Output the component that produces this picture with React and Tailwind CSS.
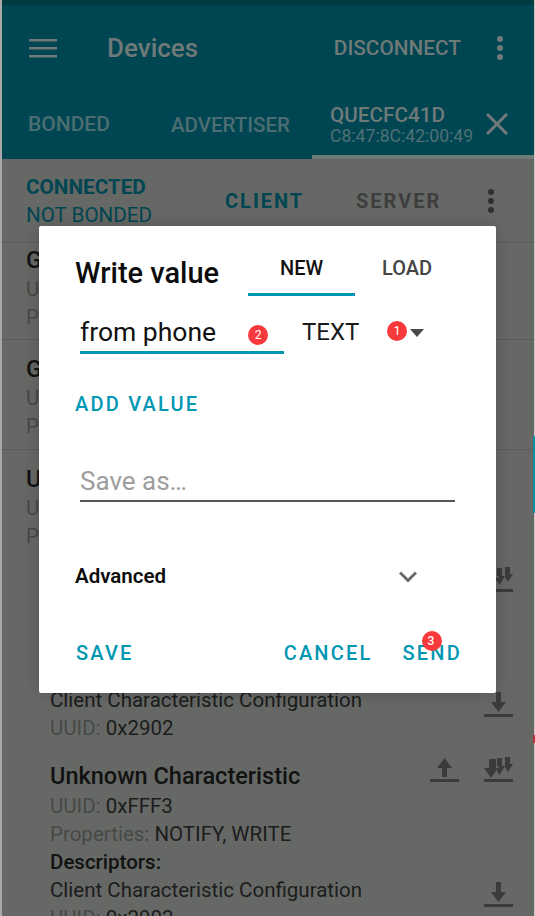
const roboto = { fontFamily: 'Roboto, sans-serif' };

function Badge({ n, className }) {
  return (
    <span className={`absolute flex h-5 w-5 items-center justify-center rounded-full bg-[#f83a3d] text-[12px] leading-none text-white ${className}`}>
      {n}
    </span>
  );
}

function Dots({ className }) {
  return (
    <svg width="8" height="24" viewBox="0 0 8 24" className={className} fill="currentColor">
      <circle cx="4" cy="3" r="3" />
      <circle cx="4" cy="12" r="3" />
      <circle cx="4" cy="21" r="3" />
    </svg>
  );
}

function ReadIcon() {
  return (
    <svg width="29" height="28" viewBox="0 0 29 28" fill="#3a3c3a">
      <path d="M12 2h5v10h5l-7.500 10L7 12h5z" />
      <rect x="0" y="24" width="29" height="3" />
    </svg>
  );
}

function WriteIcon() {
  return (
    <svg width="29" height="28" viewBox="0 0 29 28" fill="#3a3c3a">
      <path d="M14.500 3 22 13h-5v9h-5v-9H7z" />
      <rect x="0" y="24" width="29" height="3" />
    </svg>
  );
}

function NotifyIcon() {
  return (
    <svg width="29" height="28" viewBox="0 0 29 28" fill="#3a3c3a">
      <path d="M21 2h5v7h3l-5 8-3-4.500V9z" />
      <path d="M13 3h5v8h3l-5.500 9-3-4.500L15 11h-2z" />
      <path d="M5 4h7v9h2L7 23 0 13h5z" />
      <rect x="0" y="24" width="29" height="3" />
    </svg>
  );
}

function Field({ label, value }) {
  return (
    <div className="h-7 whitespace-nowrap text-[20.5px] leading-7 text-[#1b1c1b]">
      <span className="text-[#474947]">{label}: </span>
      {value}
    </div>
  );
}

function Service({ name, uuid, className }) {
  return (
    <div className={`pl-6 ${className}`}>
      <div className="h-[30px] text-[23.500px] font-medium leading-[30px] text-[#111211]">{name}</div>
      <Field label="UUID" value={uuid} />
      <Field label="PRIMARY SERVICE" value="" />
    </div>
  );
}

function Characteristic({ uuid, properties, descUuid, icons }) {
  return (
    <div className="relative h-[190px] pl-[48px]">
      <div className="h-[33px] text-[23.500px] font-medium leading-[35px] text-[#111211]">Unknown Characteristic</div>
      <Field label="UUID" value={uuid} />
      <Field label="Properties" value={properties} />
      <div className="h-7 text-[20.500px] font-medium leading-7 text-[#111211]">Descriptors:</div>
      <div className="h-7 text-[20.500px] leading-7 text-[#1b1c1b]">Client Characteristic Configuration</div>
      <Field label="UUID" value={descUuid} />
      <div className="absolute right-[21px] top-[-4px] flex gap-[25px]">{icons}</div>
      <div className="absolute right-[21px] top-[121px]">
        <ReadIcon />
      </div>
    </div>
  );
}

function Dialog() {
  return (
    <div className="absolute left-[39px] top-[226px] flex h-[467px] w-[457px] flex-col rounded-[2px] bg-white pl-9 pr-[35px] shadow-[0_0_18px_rgba(0,0,0,0.18)]">
      <div className="flex h-[70px] items-start">
        <div className="w-[173px] whitespace-nowrap pt-[27px] text-[29px] font-medium leading-10 text-[#0c0c0c]">Write value</div>
        <div className="mt-[21px] flex h-[49px] w-[107px] justify-center border-b-[3px] border-[#0097b2] text-[20px] font-medium leading-[42px] text-[#111]">NEW</div>
        <div className="mt-[21px] w-[104px] text-center text-[20px] font-medium leading-[42px] text-[#444]">LOAD</div>
      </div>

      <div className="relative flex h-[58px] items-start">
        <div className="ml-[5px] h-[58px] w-[204px] border-b-[3px] border-[#0097b2] pt-[15px] text-[26.500px] leading-[42px] text-[#111]">from phone</div>
        <div className="ml-[18px] pt-[15px] text-[24px] leading-[42px] text-[#1a1a1a]">TEXT</div>
        <svg width="14" height="8" viewBox="0 0 14 8" className="absolute left-[335px] top-[33px]" fill="#4a4a4a">
          <path d="M0 0h14L7 8z" />
        </svg>
        <Badge n="1" className="left-[312px] top-[25px]" />
        <Badge n="2" className="left-[173px] top-[29px]" />
      </div>

      <div className="mt-[38px] text-[20px] font-medium leading-6 tracking-[2.2px] text-[#0097b2]">ADD VALUE</div>

      <div className="ml-[5px] mt-[38px] h-[48px] w-[375px] border-b-2 border-[#555] pt-[6px] text-[26px] leading-[42px] text-[#9e9e9e]">Save as…</div>

      <div className="mt-[54px] flex h-10 items-center justify-between pr-[44px]">
        <span className="text-[20.500px] font-semibold text-[#0c0c0c]">Advanced</span>
        <svg width="18" height="11" viewBox="0 0 18 11" fill="none" stroke="#6b6b6b" strokeWidth="3">
          <path d="M1 1.500l8 8 8-8" />
        </svg>
      </div>

      <div className="relative mt-[45px] flex items-center text-[20px] font-medium leading-6 tracking-[2.2px] text-[#0097b2]">
        <span className="ml-px">SAVE</span>
        <span className="ml-auto">CANCEL</span>
        <span className="ml-[30px] mr-[-1px]">SEND</span>
        <Badge n="3" className="left-[347px] top-[-10px]" />
      </div>
    </div>
  );
}

export default function App() {
  return (
    <div style={roboto} className="relative h-[916px] w-[535px] overflow-hidden bg-[#666866] pl-[2px] pr-px">
      <div className="bg-[#003a43] pt-[5px]">
        <div className="bg-[#004652]">
          <div className="flex h-[86px] items-center pl-[27px] pr-[30px] text-[#6f7a78]">
            <svg width="28" height="19" viewBox="0 0 28 19" fill="currentColor">
              <rect y="0" width="28" height="2.500" />
              <rect y="8" width="28" height="2.500" />
              <rect y="16" width="28" height="2.500" />
            </svg>
            <span className="ml-[50px] text-[26px] font-medium leading-none">Devices</span>
            <span className="ml-auto text-[20.800px] font-medium leading-none">DISCONNECT</span>
            <Dots className="ml-[35px] h-6" />
          </div>
          <div className="flex h-[68px] items-stretch">
            <div className="flex w-[143px] items-center pl-[26px] text-[21px] font-medium text-[#4c6e73]">BONDED</div>
            <div className="flex w-[167px] items-center pl-[26px] text-[20.500px] font-medium text-[#4c6e73]">ADVERTISER</div>
            <div className="flex flex-1 items-center justify-between border-b-4 border-[#6f7a78] pl-[18px] pr-[26px] pt-[2px]">
              <div>
                <div className="text-[20.700px] font-medium leading-[24px] text-[#6f7a78]">QUECFC41D</div>
                <div className="whitespace-nowrap text-[17.600px] leading-[19px] text-[#4f7074]">C8:47:8C:42:00:49</div>
              </div>
              <svg width="22" height="22" viewBox="0 0 22 22" stroke="#6f7a78" strokeWidth="3" className="shrink-0">
                <path d="M1 1l20 20M21 1L1 21" />
              </svg>
            </div>
          </div>
        </div>
      </div>

      <div className="flex h-[84px] items-center border-b border-[#5a5c5a] pl-6 pr-[39px]">
        <div className="w-[199px] text-[#004652]">
          <div className="text-[20.700px] font-bold leading-7">CONNECTED</div>
          <div className="text-[20.600px] leading-7">NOT BONDED</div>
        </div>
        <span className="w-[131px] text-[20px] font-bold tracking-[2px] text-[#004652]">CLIENT</span>
        <span className="text-[20px] font-bold tracking-[2px] text-[#3d3e3d]">SERVER</span>
        <Dots className="ml-auto h-6 text-[#2f302f]" />
      </div>

      <Service name="Generic Access" uuid="0x1800" className="h-[97px] border-b border-[#5a5c5a] pt-[2px]" />
      <Service name="Generic Attribute" uuid="0x1801" className="h-[110px] border-b border-[#5a5c5a] pt-[14px]" />
      <Service name="Unknown Service" uuid="0xFFF0" className="h-[119px] pt-[14px]" />

      <Characteristic uuid="0xFFF1" properties="NOTIFY" descUuid="0x2902" icons={<NotifyIcon />} />
      <Characteristic uuid="0xFFF3" properties="NOTIFY, WRITE" descUuid="0x2902" icons={<><WriteIcon /><NotifyIcon /></>} />

      <div className="absolute left-0 top-0 h-full w-[2px] bg-[#a8a8a8]" />
      <div className="absolute right-0 top-0 h-full w-px bg-[#c8c8c8]" />
      <div className="absolute right-0 top-[436px] h-[77px] w-[2px] bg-[#0f8ea3]" />
      <div className="absolute right-0 top-[735px] h-2 w-[2px] bg-[#c0303a]" />

      <Dialog />
    </div>
  );
}
